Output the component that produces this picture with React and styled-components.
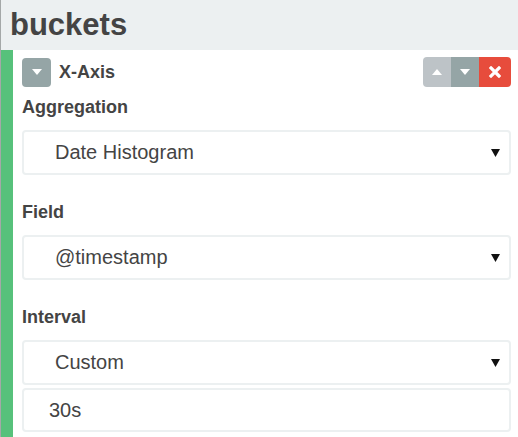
import React from "react";
import styled, { createGlobalStyle } from "styled-components";

const Global = createGlobalStyle`
  html, body { margin: 0; padding: 0; background: #fff; }
  body { font-family: "Liberation Sans", Arial, sans-serif; color: #444; }
`;

const Page = styled.div`
  width: 518px;
  height: 437px;
  overflow: hidden;
  border-left: 1px solid #a4a8a8;
  box-sizing: border-box;
  display: flex;
  flex-direction: column;
`;

const Header = styled.h2`
  margin: 0;
  height: 50px;
  line-height: 50px;
  padding-left: 9px;
  background: #ecf0f1;
  font-size: 31px;
  font-weight: bold;
  color: #444;
`;

const Agg = styled.div`
  flex: 1;
  border-left: 12px solid #57c17b;
  padding: 7px 7px 0 9px;
  display: flex;
  flex-direction: column;
`;

const AggHead = styled.div`
  display: flex;
  align-items: center;
  height: 30px;
  margin-bottom: 10px;
`;

const Toggle = styled.button`
  width: 29px;
  height: 29px;
  border: 0;
  border-radius: 4px;
  background: #95a5a6;
  padding: 0;
  display: flex;
  align-items: center;
  justify-content: center;
`;

const Title = styled.span`
  margin-left: 8px;
  font-size: 18px;
  font-weight: bold;
  flex: 1;
`;

const BtnGroup = styled.div`
  display: flex;
  height: 30px;
  border-radius: 4px;
  overflow: hidden;
`;

const GBtn = styled.button`
  width: ${(p) => p.$w}px;
  height: 30px;
  border: 0;
  padding: 0;
  background: ${(p) => p.$bg};
  display: flex;
  align-items: center;
  justify-content: center;
`;

const Group = styled.div`
  display: flex;
  flex-direction: column;
  margin-bottom: 27px;
`;

const Label = styled.label`
  font-size: 18px;
  font-weight: bold;
  line-height: 20px;
  margin-bottom: 13px;
`;

const Box = styled.div`
  box-sizing: border-box;
  height: ${(p) => p.$h || 45}px;
  border: 2px solid #ecf0f1;
  border-radius: 4px;
  display: flex;
  align-items: center;
  padding-left: ${(p) => p.$pl}px;
  padding-right: 9px;
  font-size: 20px;
  color: #444;
  margin-top: ${(p) => p.$mt || 0}px;
`;

const BoxText = styled.span`
  flex: 1;
`;

const Caret = ({ color = "#fff", up }) => (
  <svg width="10" height="6" viewBox="0 0 10 6">
    <polygon points={up ? "0,6 10,6 5,0" : "0,0 10,0 5,6"} fill={color} />
  </svg>
);

const Arrow = () => (
  <svg width="9" height="8" viewBox="0 0 9 8">
    <polygon points="0,0 9,0 4.5,8" fill="#111" />
  </svg>
);

const Times = () => (
  <svg width="12" height="12" viewBox="0 0 12 12">
    <path d="M2 2 L10 10 M10 2 L2 10" stroke="#fff" strokeWidth="3.2" strokeLinecap="square" />
  </svg>
);

const Select = ({ value }) => (
  <Box $pl={31}>
    <BoxText>{value}</BoxText>
    <Arrow />
  </Box>
);

export default function App() {
  return (
    <>
      <Global />
      <Page>
        <Header>buckets</Header>
        <Agg>
          <AggHead>
            <Toggle>
              <Caret />
            </Toggle>
            <Title>X-Axis</Title>
            <BtnGroup>
              <GBtn $w={28} $bg="#bdc3c7">
                <Caret up />
              </GBtn>
              <GBtn $w={28} $bg="#95a5a6">
                <Caret />
              </GBtn>
              <GBtn $w={32} $bg="#e74c3c">
                <Times />
              </GBtn>
            </BtnGroup>
          </AggHead>
          <Group>
            <Label>Aggregation</Label>
            <Select value="Date Histogram" />
          </Group>
          <Group>
            <Label>Field</Label>
            <Select value="@timestamp" />
          </Group>
          <Group>
            <Label>Interval</Label>
            <Select value="Custom" />
            <Box $pl={25} $mt={3} $h={44}>
              <BoxText>30s</BoxText>
            </Box>
          </Group>
        </Agg>
      </Page>
    </>
  );
}
